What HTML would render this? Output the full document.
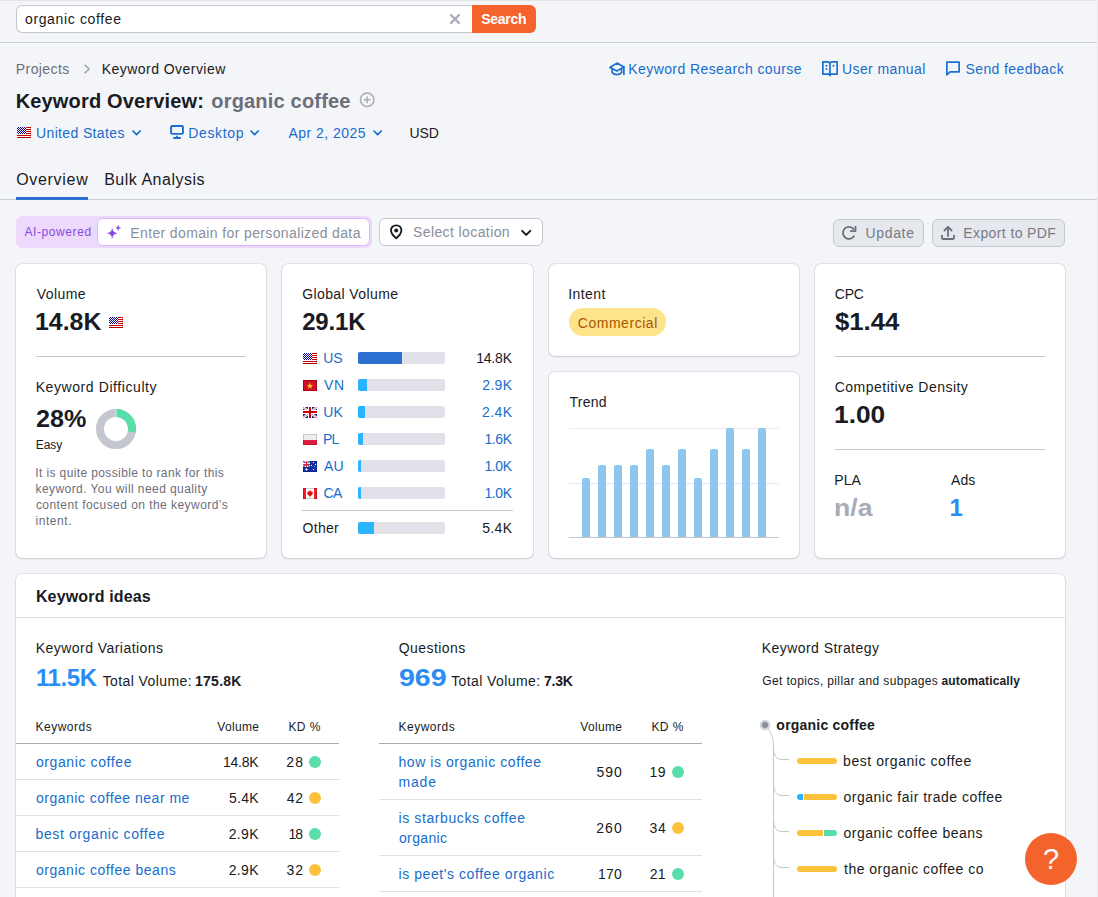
<!DOCTYPE html>
<html lang="en">
<head>
<meta charset="utf-8">
<title>Keyword Overview: organic coffee</title>
<style>
*{box-sizing:border-box;margin:0;padding:0}
html,body{width:1098px;height:897px;overflow:hidden}
body{background:#f4f5f9;font-family:"Liberation Sans",Arial,sans-serif;color:#191b23;font-size:14px;position:relative}
.a{position:absolute}
.t{position:absolute;white-space:pre;line-height:1}
.card{position:absolute;background:#fff;border-radius:6px;box-shadow:0 0 0 1px rgba(25,27,35,.055),0 0 1px 0 rgba(25,27,35,.16),0 1px 2px 0 rgba(25,27,35,.12)}
.hr{position:absolute;height:1px;background:#c4c7cf}
.sep{position:absolute;height:1px;background:#e0e1e9}
.trk{position:absolute;width:87px;height:12px;background:#e0e1e9;border-radius:2px;overflow:hidden;left:358px}
.trk i{display:block;height:12px;background:#2bb3ff}
.dot{position:absolute;width:12px;height:12px;border-radius:50%}
.g{background:#59ddaa}.y{background:#fdc23c}
.pill{position:absolute;height:6px;width:40px;border-radius:3px;overflow:hidden;background:#fff;left:797px}
.pill i{position:absolute;top:0;height:6px}
.bar{position:absolute;width:8px;background:#8ec7ee;border-radius:2px 2px 0 0}
</style>
</head>
<body>
<!-- ===== top search bar ===== -->
<div class="a" style="left:16px;top:5px;width:456px;height:28px;background:#fff;border:1px solid #c4c7cf;border-right:none;border-radius:6px 0 0 6px"></div>
<svg class="a" style="left:449px;top:13px" width="12" height="12" viewBox="0 0 12 12"><path d="M2 2l8 8M10 2l-8 8" stroke="#a6a9b8" stroke-width="2.2" fill="none" stroke-linecap="round"/></svg>
<div class="a" style="left:472px;top:5px;width:64px;height:28px;background:#f5632d;border-radius:0 6px 6px 0"></div>
<div class="hr" style="left:0;top:42px;width:1098px;background:#c9ccd4"></div>
<div class="hr" style="left:0;top:0;width:1098px;background:#e2e4e6"></div>
<div class="a" style="left:1097px;top:0;width:1px;height:897px;background:#e9ebee;z-index:5"></div>

<!-- breadcrumb chevron -->
<svg class="a" style="left:83px;top:64px" width="8" height="10" viewBox="0 0 8 10"><path d="M1.600 .8l4.500 4.200-4.500 4.200" stroke="#9a9daa" stroke-width="1.400" fill="none"/></svg>

<!-- tabs -->
<div class="hr" style="left:0;top:199px;width:1098px;background:#c9ccd4"></div>
<div class="a" style="left:16px;top:197px;width:72px;height:3px;background:#2b6fd0"></div>

<!-- toolbar -->
<div class="a" style="left:16px;top:216px;width:356px;height:32px;background:#ecd9fb;border-radius:6px"></div>
<div class="a" style="left:97px;top:218px;width:273px;height:28px;background:#fff;border:1px solid #dcb8fb;border-radius:6px"></div>
<div class="a" style="left:379px;top:218px;width:164px;height:28px;background:#fff;border:1px solid #c4c7cf;border-radius:6px"></div>
<div class="a" style="left:833px;top:219px;width:91px;height:28px;background:#e6e8ee;border:1px solid #c4c7cf;border-radius:6px"></div>
<div class="a" style="left:932px;top:219px;width:133px;height:28px;background:#e6e8ee;border:1px solid #c4c7cf;border-radius:6px"></div>

<!-- ===== cards ===== -->
<div class="card" style="left:16px;top:264px;width:250.25px;height:294px"></div>
<div class="card" style="left:282.25px;top:264px;width:250.25px;height:294px"></div>
<div class="card" style="left:548.5px;top:264px;width:250.25px;height:92px"></div>
<div class="card" style="left:548.5px;top:372px;width:250.25px;height:186px"></div>
<div class="card" style="left:814.75px;top:264px;width:250.25px;height:294px"></div>

<!-- card 1 -->
<div class="hr" style="left:36px;top:356px;width:210px"></div>
<svg class="a" style="left:96px;top:409px" width="40" height="40" viewBox="0 0 40 40">
<circle cx="20" cy="20" r="16" fill="none" stroke="#c4c7cf" stroke-width="8"/>
<circle cx="20" cy="20" r="16" fill="none" stroke="#59ddaa" stroke-width="8" stroke-dasharray="28.15 100.53" transform="rotate(-90 20 20)"/>
<path d="M20 0v8" stroke="#fff" stroke-width="0.6"/>
</svg>

<!-- card 2 bars -->
<div class="trk" style="top:352px"><i style="width:44px;background:#2b6fd0"></i></div>
<div class="trk" style="top:379px"><i style="width:9px"></i></div>
<div class="trk" style="top:406px"><i style="width:7px"></i></div>
<div class="trk" style="top:433px"><i style="width:5px"></i></div>
<div class="trk" style="top:460px"><i style="width:3px"></i></div>
<div class="trk" style="top:487px"><i style="width:3px"></i></div>
<div class="hr" style="left:302px;top:510px;width:211px"></div>
<div class="trk" style="top:522px"><i style="width:16px"></i></div>

<!-- card 3 -->
<div class="a" style="left:569px;top:308px;width:97px;height:28px;border-radius:14px;background:#fde38a"></div>
<div class="sep" style="left:569px;top:428px;width:210px;background:#ececf2"></div>
<div class="sep" style="left:569px;top:482.500px;width:210px;background:#e6e7ee"></div>
<div class="bar" style="left:582px;top:478px;height:59px"></div>
<div class="bar" style="left:598px;top:465px;height:72px"></div>
<div class="bar" style="left:614px;top:465px;height:72px"></div>
<div class="bar" style="left:630px;top:465px;height:72px"></div>
<div class="bar" style="left:646px;top:449px;height:88px"></div>
<div class="bar" style="left:662px;top:465px;height:72px"></div>
<div class="bar" style="left:678px;top:449px;height:88px"></div>
<div class="bar" style="left:694px;top:478px;height:59px"></div>
<div class="bar" style="left:710px;top:449px;height:88px"></div>
<div class="bar" style="left:726px;top:428px;height:109px"></div>
<div class="bar" style="left:742px;top:449px;height:88px"></div>
<div class="bar" style="left:758px;top:428px;height:109px"></div>
<div class="hr" style="left:569px;top:537px;width:210px"></div>

<!-- card 4 -->
<div class="hr" style="left:835px;top:356px;width:210px"></div>
<div class="hr" style="left:835px;top:449px;width:210px"></div>

<!-- ===== keyword ideas ===== -->
<div class="card" style="left:16px;top:574px;width:1049px;height:340px"></div>
<div class="sep" style="left:16px;top:617px;width:1049px"></div>
<!-- table 1 -->
<div class="hr" style="left:16px;top:743px;width:323px;background:#a9abb6"></div>
<div class="sep" style="left:16px;top:779px;width:323px"></div>
<div class="sep" style="left:16px;top:815px;width:323px"></div>
<div class="sep" style="left:16px;top:851px;width:323px"></div>
<div class="sep" style="left:16px;top:887px;width:323px"></div>
<div class="dot g" style="left:309px;top:756px"></div>
<div class="dot y" style="left:309px;top:792px"></div>
<div class="dot g" style="left:309px;top:828px"></div>
<div class="dot y" style="left:309px;top:864px"></div>
<!-- table 2 -->
<div class="hr" style="left:379px;top:743px;width:323px;background:#a9abb6"></div>
<div class="sep" style="left:379px;top:799px;width:323px"></div>
<div class="sep" style="left:379px;top:855px;width:323px"></div>
<div class="sep" style="left:379px;top:891px;width:323px"></div>
<div class="dot g" style="left:672px;top:766px"></div>
<div class="dot y" style="left:672px;top:822px"></div>
<div class="dot g" style="left:672px;top:868px"></div>
<!-- strategy tree -->
<svg class="a" style="left:752px;top:705px" width="60" height="192" viewBox="0 0 60 192">
<g fill="none" stroke="#c4c7cf" stroke-width="1">
<path d="M13 20 C18 26 21.5 30 21.5 42 V192"/>
<path d="M21.5 42 C21.5 50 24.5 54.5 30 54.5 H37"/>
<path d="M21.5 78 C21.5 86 24.5 90.5 30 90.5 H37"/>
<path d="M21.5 114 C21.5 122 24.5 126.5 30 126.5 H37"/>
<path d="M21.5 150 C21.5 158 24.5 162.5 30 162.5 H37"/>
</g>
<circle cx="13" cy="20" r="5.2" fill="#d1d4db"/>
<circle cx="13" cy="20" r="3" fill="#8a8e9b"/>
</svg>
<div class="pill" style="top:758px"><i style="left:0;width:40px;background:#fdc23c"></i></div>
<div class="pill" style="top:794px"><i style="left:0;width:6px;background:#2bb3ff"></i><i style="left:7px;width:33px;background:#fdc23c"></i></div>
<div class="pill" style="top:830px"><i style="left:0;width:26px;background:#fdc23c"></i><i style="left:27px;width:13px;background:#59ddaa"></i></div>
<div class="pill" style="top:866px"><i style="left:0;width:40px;background:#fdc23c"></i></div>

<!-- help button -->
<div class="a" style="left:1025px;top:833px;width:52px;height:52px;border-radius:50%;background:#f5632d"></div>
<div class="t" style="left:1043px;top:845.200px;font-size:29px;color:#fff">?</div>

<!-- ===== icons ===== -->
<!-- US flags -->
<svg class="a" style="left:17px;top:127px" width="14" height="11" viewBox="0 0 14 11"><g shape-rendering="crispEdges"><rect width="14" height="11" fill="#fff"/><path d="M9 .5h5M9 2.500h5M9 4.500h5M9 6.500h5M0 8.500h14" stroke="#cc0000" stroke-width="1"/><path d="M0 10.500h14" stroke="#aa0000" stroke-width="1"/><rect width="9" height="7" fill="#00008b"/><path d="M0 .5h9M0 2.500h9M0 4.500h9M0 6.500h9" stroke="#fff" stroke-width="1" stroke-dasharray="1 1"/><path d="M1 1.500h8M1 3.500h8M1 5.500h8" stroke="#fff" stroke-width="1" stroke-dasharray="1 1"/><path d="M13.500 0v11" stroke="#8a0000" stroke-width="1" opacity=".25"/></g></svg>
<svg class="a" style="left:109px;top:317px" width="14" height="11" viewBox="0 0 14 11"><g shape-rendering="crispEdges"><rect width="14" height="11" fill="#fff"/><path d="M9 .5h5M9 2.500h5M9 4.500h5M9 6.500h5M0 8.500h14" stroke="#cc0000" stroke-width="1"/><path d="M0 10.500h14" stroke="#aa0000" stroke-width="1"/><rect width="9" height="7" fill="#00008b"/><path d="M0 .5h9M0 2.500h9M0 4.500h9M0 6.500h9" stroke="#fff" stroke-width="1" stroke-dasharray="1 1"/><path d="M1 1.500h8M1 3.500h8M1 5.500h8" stroke="#fff" stroke-width="1" stroke-dasharray="1 1"/><path d="M13.500 0v11" stroke="#8a0000" stroke-width="1" opacity=".25"/></g></svg>
<svg class="a" style="left:303px;top:353px" width="14" height="11" viewBox="0 0 14 11"><g shape-rendering="crispEdges"><rect width="14" height="11" fill="#fff"/><path d="M9 .5h5M9 2.500h5M9 4.500h5M9 6.500h5M0 8.500h14" stroke="#cc0000" stroke-width="1"/><path d="M0 10.500h14" stroke="#aa0000" stroke-width="1"/><rect width="9" height="7" fill="#00008b"/><path d="M0 .5h9M0 2.500h9M0 4.500h9M0 6.500h9" stroke="#fff" stroke-width="1" stroke-dasharray="1 1"/><path d="M1 1.500h8M1 3.500h8M1 5.500h8" stroke="#fff" stroke-width="1" stroke-dasharray="1 1"/><path d="M13.500 0v11" stroke="#8a0000" stroke-width="1" opacity=".25"/></g></svg>
<!-- VN -->
<svg class="a" style="left:303px;top:380px" width="14" height="11" viewBox="0 0 14 11"><rect width="14" height="11" fill="#a90018"/><rect x="1" y="1" width="12" height="9" fill="#d01128"/><path d="M6.90 2.60L7.69 4.91L10.13 4.95L8.18 6.42L8.90 8.75L6.90 7.35L4.90 8.75L5.62 6.42L3.67 4.95L6.11 4.91z" fill="#fcd116"/></svg>
<!-- UK -->
<svg class="a" style="left:303px;top:407px" width="14" height="11" viewBox="0 0 14 11"><rect width="14" height="11" fill="#00247d"/><path d="M0 0l14 11M14 0L0 11" stroke="#fff" stroke-width="2.400"/><path d="M0 0l14 11M14 0L0 11" stroke="#e0596b" stroke-width=".8"/><g shape-rendering="crispEdges"><path d="M7 0v11M0 5h14" stroke="#fff" stroke-width="4"/><path d="M7 0v11M0 5h14" stroke="#cc0000" stroke-width="2"/></g></svg>
<!-- PL -->
<svg class="a" style="left:303px;top:434px" width="14" height="11" viewBox="0 0 14 11" shape-rendering="crispEdges"><rect width="14" height="11" fill="#c8cbc8"/><rect x="1" y="1" width="12" height="5" fill="#eceeeb"/><rect y="6" width="14" height="5" fill="#c41633"/><rect x="1" y="6" width="12" height="4" fill="#dc2041"/></svg>
<!-- AU -->
<svg class="a" style="left:303px;top:461px" width="14" height="11" viewBox="0 0 14 11"><rect width="14" height="11" fill="#04147f"/><rect x=".5" y=".5" width="13" height="10" fill="#13309b"/><rect width="7" height="6" fill="#f4f6fb"/><path d="M0 0l2.500 2M7 0L4.500 2M0 6l2.500-2M7 6L4.500 4" stroke="#3a4fa8" stroke-width="1.300"/><g shape-rendering="crispEdges"><path d="M3.500 0v6M0 3.500h7" stroke="#ee1c25" stroke-width="1"/></g><g fill="#fff"><path d="M3.500 6.900l.6 1 1.100.6-1.100.6-.6 1-.6-1-1.100-.6 1.100-.6z"/><rect x="10" y="1" width="1" height="1"/><rect x="12" y="3" width="1" height="1"/><rect x="8" y="4" width="1" height="1"/><rect x="11" y="5" width="1" height="1" fill="#6fa0e0"/><rect x="10" y="8" width="1" height="1"/></g></svg>
<!-- CA -->
<svg class="a" style="left:303px;top:488px" width="14" height="11" viewBox="0 0 14 11"><rect width="14" height="11" fill="#fff"/><g shape-rendering="crispEdges"><rect x="3" width="8" height="1" fill="#cfd2d2"/><rect x="3" y="10" width="8" height="1" fill="#cfd2d2"/><rect width="3" height="11" fill="#f51d2e"/><rect x="11" width="3" height="11" fill="#f51d2e"/><rect width="1" height="11" fill="#c81422"/><rect x="13" width="1" height="11" fill="#c81422"/><rect width="3" height="1" fill="#c81422"/><rect x="11" width="3" height="1" fill="#c81422"/><rect y="10" width="3" height="1" fill="#c81422"/><rect x="11" y="10" width="3" height="1" fill="#c81422"/></g><path d="M7 2.100l.9 1.300.8-.3-.1 1.500 1.300-.5-.3 1.900-.9 1.100-1.100.9-.3.100v1.500h-.6V8.100l-.3-.1-1.100-.9-.9-1.100-.3-1.900 1.300.5-.1-1.500.8.300z" fill="#f00000"/></svg>

<!-- filter chevrons -->
<svg class="a" style="left:132.400px;top:130.200px" width="10" height="7" viewBox="0 0 10 7"><path d="M1 1l3.6 3.6L8.200 1" fill="none" stroke="#1a6fd0" stroke-width="1.7" stroke-linecap="round" stroke-linejoin="round"/></svg>
<svg class="a" style="left:250px;top:130.200px" width="10" height="7" viewBox="0 0 10 7"><path d="M1 1l3.6 3.6L8.200 1" fill="none" stroke="#1a6fd0" stroke-width="1.7" stroke-linecap="round" stroke-linejoin="round"/></svg>
<svg class="a" style="left:373.300px;top:130.200px" width="10" height="7" viewBox="0 0 10 7"><path d="M1 1l3.6 3.6L8.200 1" fill="none" stroke="#1a6fd0" stroke-width="1.7" stroke-linecap="round" stroke-linejoin="round"/></svg>
<!-- desktop -->
<svg class="a" style="left:169px;top:124px" width="16" height="16" viewBox="0 0 16 16"><rect x="2.050" y="2.050" width="11.900" height="7.800" rx="1" fill="none" stroke="#1a6fd0" stroke-width="1.900"/><path d="M4.900 14h6.200" stroke="#1a6fd0" stroke-width="1.800" stroke-linecap="round"/><path d="M8 12.500v1" stroke="#1a6fd0" stroke-width="1.800" stroke-linecap="round"/></svg>
<!-- plus circle -->
<svg class="a" style="left:359px;top:92px" width="16" height="16" viewBox="0 0 16 16"><circle cx="8.200" cy="7.800" r="6.750" fill="none" stroke="#a9abb6" stroke-width="1.500"/><path d="M8.200 4.400v6.800M4.800 7.800h6.800" stroke="#a9abb6" stroke-width="1.500"/></svg>
<!-- grad cap -->
<svg class="a" style="left:608px;top:61px" width="18" height="16" viewBox="0 0 18 16"><g fill="none" stroke="#1a6fd0" stroke-width="1.700" stroke-linejoin="round" stroke-linecap="round"><path d="M1.900 6.500L8.900 2.100l7 4-7 3.800z"/><path d="M4.200 8.300v3.400c1.200 1.300 2.800 2 4.700 2s3.500-.7 4.700-2V8.300"/><path d="M15.900 6.200v7"/></g></svg>
<!-- book -->
<svg class="a" style="left:821px;top:60px" width="18" height="18" viewBox="0 0 18 18"><g fill="none" stroke="#1a6fd0" stroke-width="1.700" stroke-linejoin="round"><path d="M1.850 1.950h4.600c1.400 0 2.500.6 2.500 1.600 0-1 1.100-1.600 2.500-1.600h4.700v12.100H1.850z"/><path d="M8.950 3.200v12.400"/></g><path d="M7.300 14.500h3.300l-1.650 2.300z" fill="#1a6fd0"/><g fill="#1a6fd0"><circle cx="5.500" cy="5.800" r="1"/><circle cx="5.500" cy="8.900" r="1"/><circle cx="12.500" cy="5.800" r="1"/></g></svg>
<!-- chat -->
<svg class="a" style="left:945px;top:60px" width="16" height="18" viewBox="0 0 16 18"><path d="M1.850 14.800V2.100h12.300v9.700H5.100z" fill="none" stroke="#1a6fd0" stroke-width="1.700" stroke-linejoin="round"/></svg>
<!-- sparkle -->
<svg class="a" style="left:106px;top:224px" width="16" height="16" viewBox="0 0 16 16"><path d="M6.200 4.600c.5 2.800 1.400 3.900 4.500 4.700-3.100.8-4 1.900-4.500 4.900-.5-3-1.400-4.100-4.600-4.900 3.200-.8 4.100-1.900 4.600-4.700z" fill="#8649e1" stroke="#8649e1" stroke-width=".5" stroke-linejoin="round"/><path d="M12.200 1.200c.25 1.500.8 2.100 2.500 2.600-1.700.5-2.250 1.100-2.500 2.700-.25-1.600-.8-2.200-2.500-2.700 1.700-.5 2.250-1.100 2.500-2.600z" fill="#8649e1" stroke="#8649e1" stroke-width=".4" stroke-linejoin="round"/></svg>
<!-- pin -->
<svg class="a" style="left:388px;top:223px" width="16" height="18" viewBox="0 0 16 18"><path d="M8.200 2.350c3.100 0 5.200 2.200 5.200 5 0 2.900-2.300 5.600-5.200 8-2.900-2.400-5.200-5.100-5.200-8 0-2.800 2.100-5 5.200-5z" fill="none" stroke="#191b23" stroke-width="1.900" stroke-linejoin="round"/><circle cx="8.200" cy="7.500" r="2" fill="#191b23"/></svg>
<!-- select chevron -->
<svg class="a" style="left:520px;top:229px" width="12" height="8" viewBox="0 0 12 8"><path d="M2.100 1.900l4.100 4 4.100-4" fill="none" stroke="#191b23" stroke-width="2" stroke-linecap="round" stroke-linejoin="round"/></svg>
<!-- refresh -->
<svg class="a" style="left:841px;top:225px" width="16" height="16" viewBox="0 0 16 16"><path d="M12.900 11.300a6 6 0 1 1-.3-7.200" fill="none" stroke="#6c6e79" stroke-width="1.800" stroke-linecap="round"/><path d="M14.500 1.600v4.500H9.800" fill="none" stroke="#6c6e79" stroke-width="1.800" stroke-linecap="round" stroke-linejoin="round"/></svg>
<!-- export -->
<svg class="a" style="left:940px;top:225px" width="16" height="16" viewBox="0 0 16 16"><g fill="none" stroke="#6c6e79" stroke-width="1.800" stroke-linecap="round" stroke-linejoin="round"><path d="M2 10.700v2.400c0 .5.400.9.900.9h10.200c.5 0 .9-.4.900-.9v-2.400"/><path d="M8 11V2.200M4.400 5.500L8 1.900l3.600 3.600"/></g></svg>

<!-- text -->
<div class="t" style="left:24.96px;top:12.1px;font-size:14px;letter-spacing:0.64px;">organic coffee</div>
<div class="t" style="left:481.18px;top:12.1px;font-size:14px;letter-spacing:-0.26px;font-weight:700;color:#fff;">Search</div>
<div class="t" style="left:15.81px;top:62.1px;font-size:14px;letter-spacing:0.42px;color:#6c6e79;">Projects</div>
<div class="t" style="left:101.81px;top:62.1px;font-size:14px;letter-spacing:0.45px;">Keyword Overview</div>
<div class="t" style="left:628.31px;top:62.1px;font-size:14px;letter-spacing:0.41px;color:#176dcb;">Keyword Research course</div>
<div class="t" style="left:842.02px;top:62.1px;font-size:14px;letter-spacing:0.39px;color:#176dcb;">User manual</div>
<div class="t" style="left:965.46px;top:62.1px;font-size:14px;letter-spacing:0.4px;color:#176dcb;">Send feedback</div>
<div class="t" style="left:15.65px;top:91.1px;font-size:20px;letter-spacing:0.17px;font-weight:700;">Keyword Overview:</div>
<div class="t" style="left:211.28px;top:91.1px;font-size:20px;letter-spacing:0.19px;font-weight:700;color:#6c6e79;">organic coffee</div>
<div class="t" style="left:36.02px;top:126.1px;font-size:14px;letter-spacing:0.36px;color:#176dcb;">United States</div>
<div class="t" style="left:188.31px;top:126.1px;font-size:14px;letter-spacing:0.63px;color:#176dcb;">Desktop</div>
<div class="t" style="left:288.40px;top:126.1px;font-size:14px;letter-spacing:0.47px;color:#176dcb;">Apr 2, 2025</div>
<div class="t" style="left:409.52px;top:126.1px;font-size:14px;letter-spacing:-0.1px;">USD</div>
<div class="t" style="left:16.15px;top:171.5px;font-size:16px;letter-spacing:0.7px;">Overview</div>
<div class="t" style="left:104.15px;top:171.5px;font-size:16px;letter-spacing:0.51px;">Bulk Analysis</div>
<div class="t" style="left:24.40px;top:225.8px;font-size:12px;letter-spacing:0.6px;color:#8649e1;">AI-powered</div>
<div class="t" style="left:130.31px;top:226.1px;font-size:14px;letter-spacing:0.37px;color:#8a8e9b;">Enter domain for personalized data</div>
<div class="t" style="left:412.96px;top:225.1px;font-size:14px;letter-spacing:0.4px;color:#8a8e9b;">Select location</div>
<div class="t" style="left:865.52px;top:226.1px;font-size:14px;letter-spacing:0.66px;color:#787b87;">Update</div>
<div class="t" style="left:963.31px;top:226.1px;font-size:14px;letter-spacing:0.39px;color:#787b87;">Export to PDF</div>
<div class="t" style="left:36.80px;top:287.1px;font-size:14px;letter-spacing:0.41px;">Volume</div>
<div class="t" style="left:35.24px;top:309.7px;font-size:24px;transform:scaleX(1.037);transform-origin:0 0;font-weight:700;">14.8K</div>
<div class="t" style="left:35.71px;top:380.1px;font-size:14px;letter-spacing:0.58px;">Keyword Difficulty</div>
<div class="t" style="left:36.01px;top:406.7px;font-size:24px;transform:scaleX(1.048);transform-origin:0 0;font-weight:700;">28%</div>
<div class="t" style="left:35.85px;top:438.5px;font-size:12px;letter-spacing:-0.08px;">Easy</div>
<div class="t" style="left:35.30px;top:466.8px;font-size:12px;letter-spacing:0.38px;color:#6c6e79;">It is quite possible to rank for this</div>
<div class="t" style="left:35.60px;top:482.8px;font-size:12px;letter-spacing:0.42px;color:#6c6e79;">keyword. You will need quality</div>
<div class="t" style="left:35.90px;top:498.8px;font-size:12px;letter-spacing:0.45px;color:#6c6e79;">content focused on the keyword’s</div>
<div class="t" style="left:35.60px;top:514.8px;font-size:12px;letter-spacing:0.53px;color:#6c6e79;">intent.</div>
<div class="t" style="left:302.24px;top:287.1px;font-size:14px;letter-spacing:0.39px;">Global Volume</div>
<div class="t" style="left:302.15px;top:309.7px;font-size:24px;letter-spacing:-0.18px;font-weight:700;">29.1K</div>
<div class="t" style="left:323.22px;top:351.1px;font-size:14px;letter-spacing:-0.09px;color:#176dcb;">US</div>
<div class="t" style="left:476.14px;top:351.1px;font-size:14px;letter-spacing:-0.17px;">14.8K</div>
<div class="t" style="left:324.10px;top:378.1px;font-size:14px;letter-spacing:0.59px;color:#176dcb;">VN</div>
<div class="t" style="left:482.35px;top:378.1px;font-size:14px;letter-spacing:0.3px;color:#176dcb;">2.9K</div>
<div class="t" style="left:323.22px;top:405.1px;font-size:14px;letter-spacing:0.08px;color:#176dcb;">UK</div>
<div class="t" style="left:481.93px;top:405.1px;font-size:14px;letter-spacing:0.44px;color:#176dcb;">2.4K</div>
<div class="t" style="left:323.01px;top:432.1px;font-size:14px;letter-spacing:-0.88px;color:#176dcb;">PL</div>
<div class="t" style="left:484.51px;top:432.1px;font-size:14px;letter-spacing:-0.42px;color:#176dcb;">1.6K</div>
<div class="t" style="left:324.10px;top:459.1px;font-size:14px;letter-spacing:-0.03px;color:#176dcb;">AU</div>
<div class="t" style="left:484.51px;top:459.1px;font-size:14px;letter-spacing:-0.42px;color:#176dcb;">1.0K</div>
<div class="t" style="left:323.44px;top:486.1px;font-size:14px;letter-spacing:-0.66px;color:#176dcb;">CA</div>
<div class="t" style="left:484.51px;top:486.1px;font-size:14px;letter-spacing:-0.42px;color:#176dcb;">1.0K</div>
<div class="t" style="left:302.54px;top:521.1px;font-size:14px;letter-spacing:0.3px;">Other</div>
<div class="t" style="left:482.17px;top:521.1px;font-size:14px;letter-spacing:0.36px;">5.4K</div>
<div class="t" style="left:568.31px;top:287.1px;font-size:14px;letter-spacing:0.4px;">Intent</div>
<div class="t" style="left:577.74px;top:315.6px;font-size:14px;letter-spacing:0.54px;color:#a75800;">Commercial</div>
<div class="t" style="left:569.38px;top:394.9px;font-size:14px;letter-spacing:0.29px;">Trend</div>
<div class="t" style="left:834.74px;top:287.1px;font-size:14px;letter-spacing:-0.21px;">CPC</div>
<div class="t" style="left:835.40px;top:309.7px;font-size:24px;transform:scaleX(1.071);transform-origin:0 0;font-weight:700;">$1.44</div>
<div class="t" style="left:834.74px;top:380.1px;font-size:14px;letter-spacing:0.48px;">Competitive Density</div>
<div class="t" style="left:833.76px;top:402.7px;font-size:24px;transform:scaleX(1.096);transform-origin:0 0;font-weight:700;">1.00</div>
<div class="t" style="left:834.31px;top:473.1px;font-size:14px;letter-spacing:0.03px;">PLA</div>
<div class="t" style="left:950.90px;top:473.1px;font-size:14px;letter-spacing:0.16px;">Ads</div>
<div class="t" style="left:833.73px;top:495.9px;font-size:24px;transform:scaleX(1.110);transform-origin:0 0;font-weight:700;color:#a9abb6;">n/a</div>
<div class="t" style="left:949.40px;top:495.9px;font-size:24px;font-weight:700;color:#2a8df4;">1</div>
<div class="t" style="left:35.90px;top:588.5px;font-size:16px;letter-spacing:0.16px;font-weight:700;">Keyword ideas</div>
<div class="t" style="left:35.81px;top:641.1px;font-size:14px;letter-spacing:0.45px;">Keyword Variations</div>
<div class="t" style="left:35.90px;top:666.2px;font-size:24px;letter-spacing:-0.41px;font-weight:700;color:#2a8df4;">11.5K</div>
<div class="t" style="left:102.68px;top:673.8px;font-size:14px;letter-spacing:0.41px;">Total Volume:</div>
<div class="t" style="left:195.03px;top:673.8px;font-size:14px;letter-spacing:0.26px;font-weight:700;">175.8K</div>
<div class="t" style="left:35.45px;top:721.3px;font-size:12px;letter-spacing:0.52px;">Keywords</div>
<div class="t" style="left:217.35px;top:721.3px;font-size:12px;letter-spacing:0.31px;">Volume</div>
<div class="t" style="left:288.45px;top:721.3px;font-size:12px;letter-spacing:0.4px;">KD %</div>
<div class="t" style="left:35.96px;top:755.1px;font-size:14px;letter-spacing:0.6px;color:#176dcb;">organic coffee</div>
<div class="t" style="left:223.04px;top:755.1px;font-size:14px;letter-spacing:-0.27px;">14.8K</div>
<div class="t" style="left:286.25px;top:755.1px;font-size:14px;letter-spacing:1.15px;">28</div>
<div class="t" style="left:35.96px;top:791.1px;font-size:14px;letter-spacing:0.5px;color:#176dcb;">organic coffee near me</div>
<div class="t" style="left:228.97px;top:791.1px;font-size:14px;letter-spacing:0.26px;">5.4K</div>
<div class="t" style="left:286.69px;top:791.1px;font-size:14px;letter-spacing:0.71px;">42</div>
<div class="t" style="left:35.52px;top:827.1px;font-size:14px;letter-spacing:0.61px;color:#176dcb;">best organic coffee</div>
<div class="t" style="left:228.73px;top:827.1px;font-size:14px;letter-spacing:0.34px;">2.9K</div>
<div class="t" style="left:288.53px;top:827.1px;font-size:14px;letter-spacing:-1.13px;">18</div>
<div class="t" style="left:35.96px;top:863.1px;font-size:14px;letter-spacing:0.53px;color:#176dcb;">organic coffee beans</div>
<div class="t" style="left:228.73px;top:863.1px;font-size:14px;letter-spacing:0.34px;">2.9K</div>
<div class="t" style="left:286.47px;top:863.1px;font-size:14px;letter-spacing:0.93px;">32</div>
<div class="t" style="left:398.74px;top:641.1px;font-size:14px;letter-spacing:0.44px;">Questions</div>
<div class="t" style="left:398.51px;top:666.2px;font-size:24px;transform:scaleX(1.189);transform-origin:0 0;font-weight:700;color:#2a8df4;">969</div>
<div class="t" style="left:451.18px;top:673.8px;font-size:14px;letter-spacing:0.41px;">Total Volume:</div>
<div class="t" style="left:543.96px;top:673.8px;font-size:14px;letter-spacing:-0.2px;font-weight:700;">7.3K</div>
<div class="t" style="left:398.45px;top:721.3px;font-size:12px;letter-spacing:0.52px;">Keywords</div>
<div class="t" style="left:580.35px;top:721.3px;font-size:12px;letter-spacing:0.31px;">Volume</div>
<div class="t" style="left:651.45px;top:721.3px;font-size:12px;letter-spacing:0.4px;">KD %</div>
<div class="t" style="left:398.52px;top:755.1px;font-size:14px;letter-spacing:0.56px;color:#176dcb;">how is organic coffee</div>
<div class="t" style="left:398.52px;top:775.1px;font-size:14px;letter-spacing:0.81px;color:#176dcb;">made</div>
<div class="t" style="left:596.47px;top:765.1px;font-size:14px;letter-spacing:0.96px;">590</div>
<div class="t" style="left:649.53px;top:765.1px;font-size:14px;letter-spacing:0.37px;">19</div>
<div class="t" style="left:398.52px;top:811.1px;font-size:14px;letter-spacing:0.6px;color:#176dcb;">is starbucks coffee</div>
<div class="t" style="left:398.96px;top:831.1px;font-size:14px;letter-spacing:0.37px;color:#176dcb;">organic</div>
<div class="t" style="left:596.25px;top:821.1px;font-size:14px;letter-spacing:1.07px;">260</div>
<div class="t" style="left:649.47px;top:821.1px;font-size:14px;letter-spacing:0.71px;">34</div>
<div class="t" style="left:398.52px;top:867.1px;font-size:14px;letter-spacing:0.57px;color:#176dcb;">is peet's coffee organic</div>
<div class="t" style="left:598.03px;top:867.1px;font-size:14px;letter-spacing:0.18px;">170</div>
<div class="t" style="left:649.75px;top:867.1px;font-size:14px;letter-spacing:0.15px;">21</div>
<div class="t" style="left:761.81px;top:641.1px;font-size:14px;letter-spacing:0.44px;">Keyword Strategy</div>
<div class="t" style="left:762.30px;top:674.8px;font-size:12px;letter-spacing:0.36px;">Get topics, pillar and subpages</div>
<div class="t" style="left:941.55px;top:674.8px;font-size:12px;letter-spacing:0.14px;font-weight:700;">automatically</div>
<div class="t" style="left:776.36px;top:718.1px;font-size:14px;letter-spacing:0.22px;font-weight:700;">organic coffee</div>
<div class="t" style="left:843.12px;top:753.8px;font-size:14px;letter-spacing:0.56px;">best organic coffee</div>
<div class="t" style="left:843.56px;top:789.8px;font-size:14px;letter-spacing:0.5px;">organic fair trade coffee</div>
<div class="t" style="left:843.56px;top:825.8px;font-size:14px;letter-spacing:0.49px;">organic coffee beans</div>
<div class="t" style="left:844.00px;top:861.8px;font-size:14px;letter-spacing:0.49px;">the organic coffee co</div>
</body>
</html>
